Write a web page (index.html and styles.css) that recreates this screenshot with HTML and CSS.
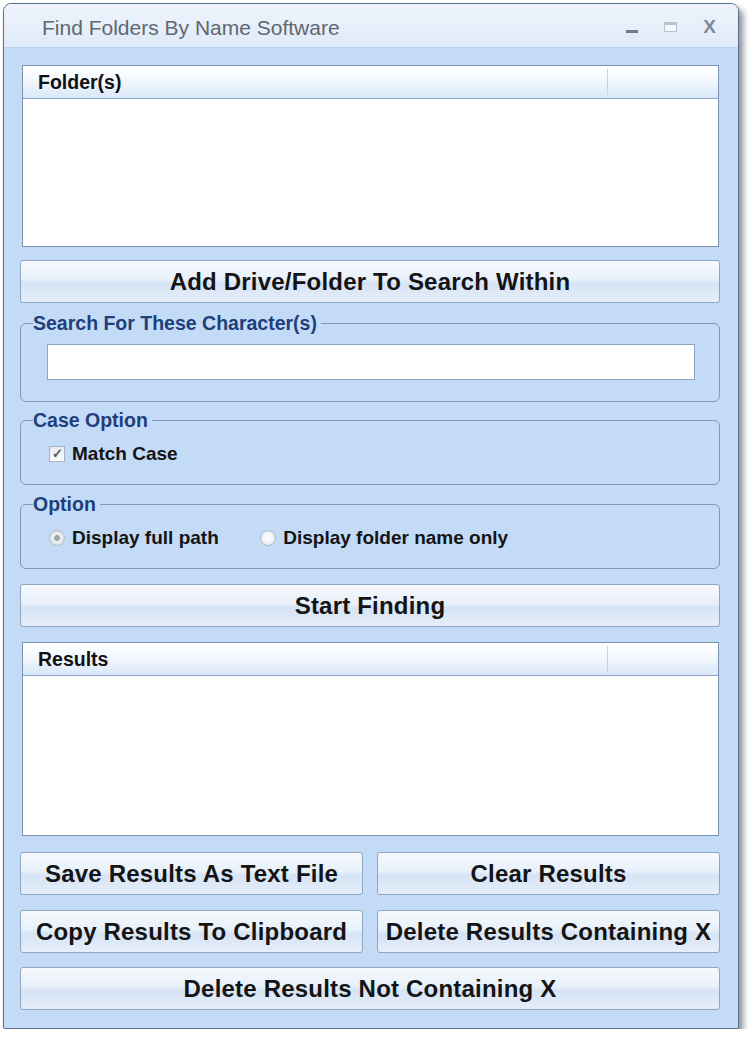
FILE: index.html
```html
<!DOCTYPE html>
<html lang="en">
<head>
  <meta charset="UTF-8" />
  <title>Find Folders By Name Software</title>
  <link rel="stylesheet" href="styles.css">
</head>
<body>

<div class="window">
  <div class="titlebar">
    <span class="title">Find Folders By Name Software</span>
    <div class="controls">
      <span class="ctl-min"></span>
      <span class="ctl-max"></span>
      <span class="ctl-close">X</span>
    </div>
  </div>

  <div class="client">
    <div class="listview folders">
      <div class="list-header">
        <span class="col-main">Folder(s)</span>
        <span class="col-rest"></span>
      </div>
    </div>

    <button class="btn btn-add">Add Drive/Folder To Search Within</button>

    <fieldset class="group group-search">
      <legend>Search For These Character(s)</legend>
      <input type="text" class="search-input" />
    </fieldset>

    <fieldset class="group group-case">
      <legend>Case Option</legend>
      <label class="opt"><span class="check">&#10003;</span>Match Case</label>
    </fieldset>

    <fieldset class="group group-option">
      <legend>Option</legend>
      <label class="opt"><span class="radio on"></span>Display full path</label>
      <label class="opt opt-second"><span class="radio"></span>Display folder name only</label>
    </fieldset>

    <button class="btn btn-start">Start Finding</button>

    <div class="listview results">
      <div class="list-header">
        <span class="col-main">Results</span>
        <span class="col-rest"></span>
      </div>
    </div>

    <div class="btn-grid">
      <button class="btn">Save Results As Text File</button>
      <button class="btn">Clear Results</button>
      <button class="btn">Copy Results To Clipboard</button>
      <button class="btn">Delete Results Containing X</button>
      <button class="btn btn-wide">Delete Results Not Containing X</button>
    </div>
  </div>
</div>

</body>
</html>
```

FILE: styles.css
```css
body {
  margin: 0;
  background: #fff;
  font-family: 'Liberation Sans', Arial, sans-serif;
}
.window {
  margin: 3px 0 0 3px;
  width: 736px;
  height: 1026px;
  box-sizing: border-box;
  border: 1px solid #5d708a;
  border-radius: 8px 8px 2px 2px;
  background: #c3dbf7;
  box-shadow: 4px 5px 6px rgba(40, 50, 70, 0.55);
  display: flex;
  flex-direction: column;
  overflow: hidden;
}
.titlebar {
  height: 43px;
  background: linear-gradient(#eef4fc, #dfeaf8);
  border-bottom: 1px solid #bcd3ee;
  display: flex;
  justify-content: space-between;
  align-items: center;
  padding: 0 22px 0 38px;
}
.title {
  font-size: 21px;
  color: #606770;
  padding-top: 5px;
}
.controls {
  display: flex;
  align-items: center;
  gap: 26px;
  padding-top: 2px;
}
.ctl-min {
  width: 12px;
  height: 3px;
  background: #707a88;
  margin-top: 10px;
}
.ctl-max {
  width: 13px;
  height: 10px;
  border: 1px solid #b8c2ce;
  border-top: 3px solid #b8c2ce;
  box-sizing: border-box;
  background: #f4f7fb;
}
.ctl-close {
  font-size: 19px;
  font-weight: bold;
  color: #7c8896;
}
.client {
  flex: 1;
  padding: 17px 18px 0 16px;
  display: flex;
  flex-direction: column;
}
.listview {
  background: #fff;
  border: 1px solid #7a92b0;
  margin: 0 1px 0 2px;
}
.folders {
  height: 182px;
  box-sizing: border-box;
}
.results {
  height: 194px;
  box-sizing: border-box;
  margin-top: 15px;
}
.list-header {
  display: flex;
  height: 32px;
  background: linear-gradient(#ffffff, #f3f8fd 45%, #d8e7f9);
  border-bottom: 1px solid #8aa6cc;
}
.col-main {
  width: 569px;
  border-right: 1px solid #c6d2de;
  margin: 3px 0;
  padding-left: 15px;
  font-size: 19.5px;
  font-weight: bold;
  color: #111;
  line-height: 27px;
}
.btn {
  height: 43px;
  border: 1px solid #8fa5c0;
  border-radius: 3px;
  background: linear-gradient(#f6f9fd, #e8f0fa 45%, #d6e4f5 55%, #e6eef9);
  font-family: 'Liberation Sans', Arial, sans-serif;
  font-size: 24px;
  font-weight: bold;
  color: #141414;
  letter-spacing: 0.2px;
  padding: 0;
}
.btn-add {
  margin-top: 13px;
}
.btn-start {
  margin-top: 15px;
}
.group {
  margin: 0;
  border: 1px solid #7f9ab8;
  border-radius: 6px;
  padding: 0 0 0 26px;
  box-sizing: border-box;
}
.group legend {
  font-size: 19.5px;
  font-weight: bold;
  color: #1f3f7a;
  padding: 0 4px 0 0;
  margin-left: -14px;
  line-height: 20px;
}
.group-search {
  margin-top: 10px;
  height: 89px;
}
.search-input {
  width: 648px;
  height: 36px;
  box-sizing: border-box;
  border: 1px solid #8ea4bf;
  background: #fff;
  margin-top: 11px;
}
.group-case {
  margin-top: 8px;
  height: 75px;
}
.group-option {
  margin-top: 9px;
  height: 75px;
}
.opt {
  display: inline-flex;
  align-items: center;
  font-size: 19px;
  font-weight: bold;
  color: #141414;
  margin-top: 13px;
  margin-left: 2px;
}
.opt-second {
  margin-left: 37px;
}
.check {
  width: 16px;
  height: 16px;
  box-sizing: border-box;
  border: 1px solid #a9b4c0;
  background: linear-gradient(#e8ecf0, #fbfcfd);
  font-size: 13px;
  line-height: 14px;
  text-align: center;
  color: #555d68;
  margin-right: 7px;
}
.radio {
  width: 16px;
  height: 16px;
  box-sizing: border-box;
  border-radius: 50%;
  border: 1px solid #b4bcc6;
  background: radial-gradient(circle, #f6f8fa 40%, #d5dbe2);
  margin-right: 7px;
}
.radio.on {
  background: radial-gradient(circle, #9aa4ae 0, #9aa4ae 26%, #eef1f4 32%, #d3d9e0);
}
.btn-grid {
  margin-top: 16px;
  display: grid;
  grid-template-columns: 343px 343px;
  column-gap: 14px;
  row-gap: 15px;
}
.btn-grid .btn {
  height: 43px;
}
.btn-wide {
  grid-column: 1 / 3;
  margin-top: -1px;
}
```
